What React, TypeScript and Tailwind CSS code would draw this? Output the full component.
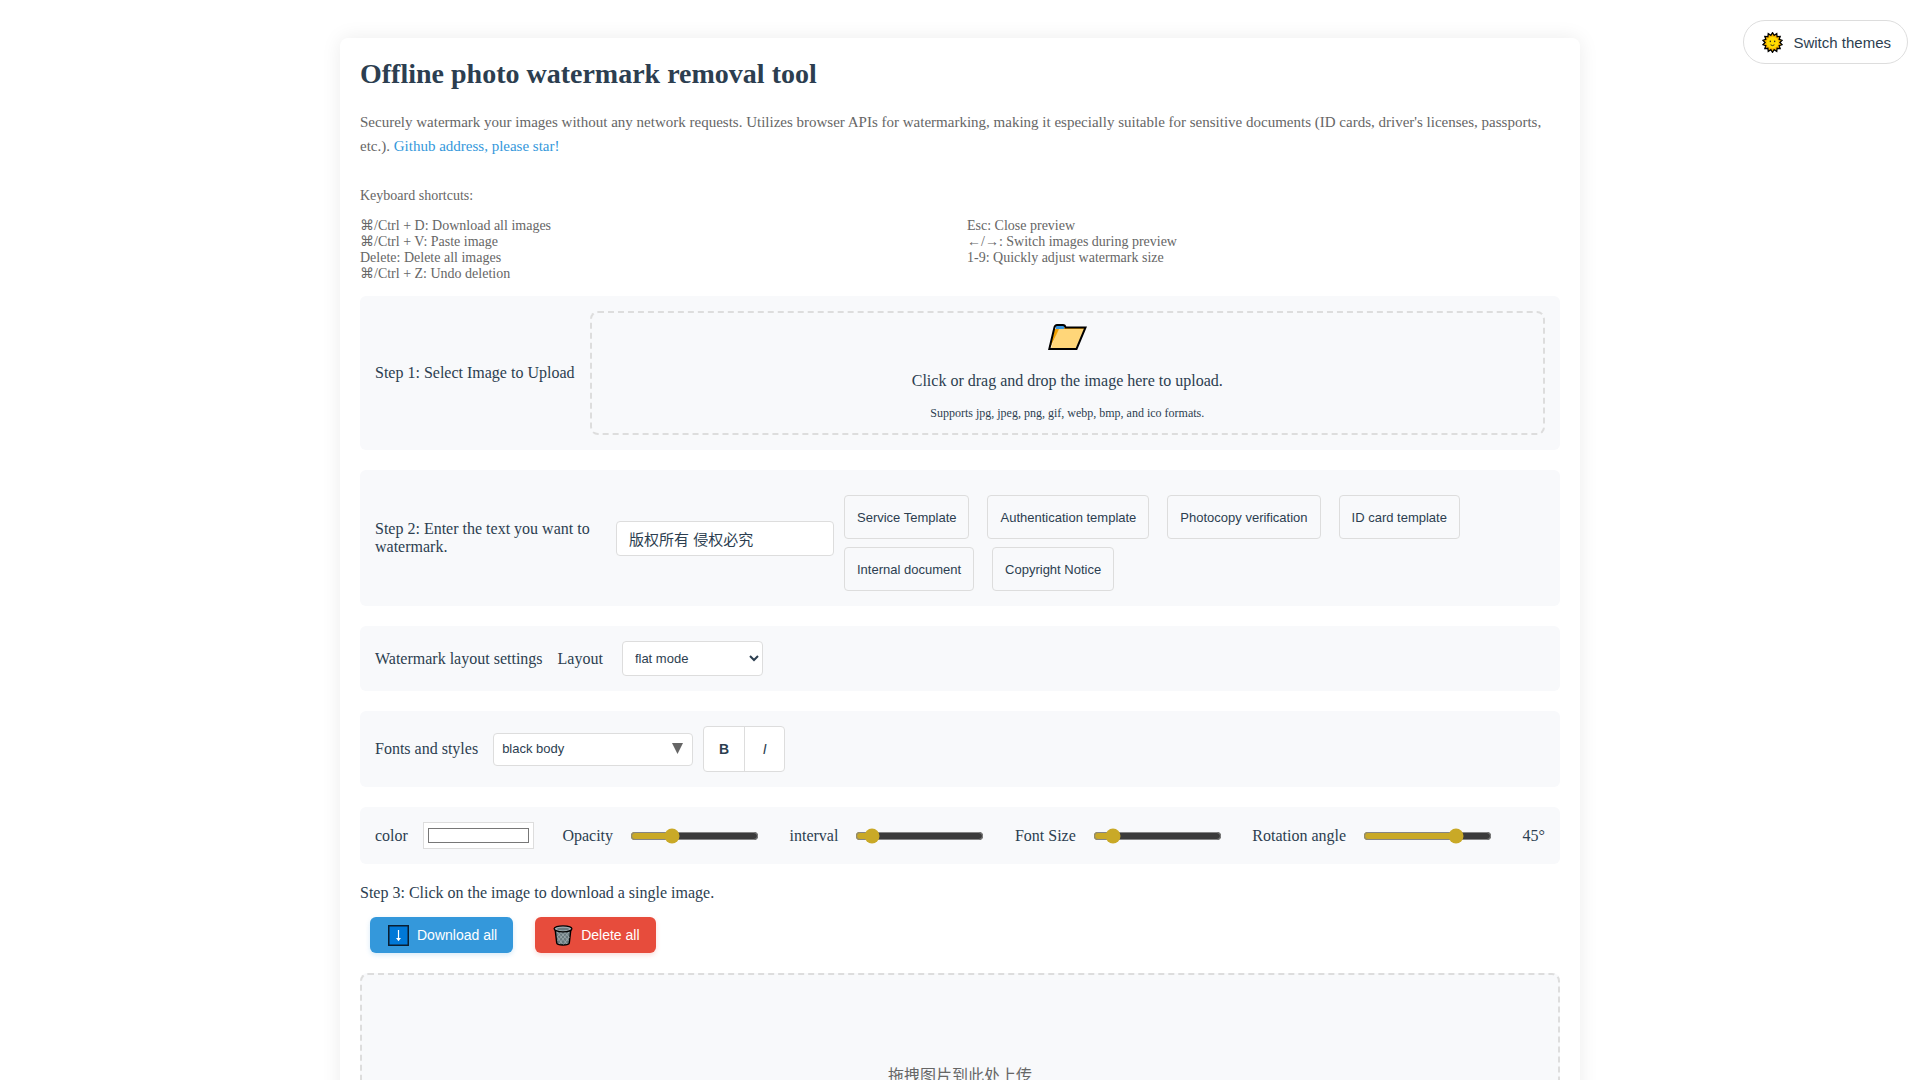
import React, { useState } from "react";

// =========================
// ICONS
// =========================
const SUN_POINTS = Array.from({ length: 28 }, (_, i) => {
  const r = i % 2 === 0 ? 9.8 : 7.4;
  const a = (i * Math.PI) / 14 - Math.PI / 2;
  return `${(10.5 + r * Math.cos(a)).toFixed(2)},${(10.5 + r * Math.sin(a)).toFixed(2)}`;
}).join(" ");

const SunIcon = () => (
  <svg width="21" height="21" viewBox="0 0 21 21" aria-hidden="true">
    <polygon points={SUN_POINTS} fill="#fcb900" stroke="#000" strokeWidth="1.3" />
    <circle cx="10.5" cy="10.5" r="5.8" fill="#ffdd00" />
    <ellipse cx="8.3" cy="9.3" rx="0.7" ry="0.9" fill="#222" />
    <ellipse cx="12.7" cy="9.3" rx="0.7" ry="0.9" fill="#222" />
    <path d="M8.6 12.8q1.9 1.6 3.8 0" fill="none" stroke="#222" strokeWidth="0.9" />
  </svg>
);

const FolderIcon = () => (
  <svg width="40" height="28" viewBox="0 0 40 28" aria-hidden="true">
    <path d="M8 6L3 25L10 7H38V5H18z" fill="#f2a100" />
    <path d="M11 6H38L29 25H4z" fill="#ffd679" />
    <path d="M3 25L8 6H12z" fill="#f2a100" />
    <path d="M9 3h8v3H9z" fill="#3a96dd" />
    <path d="M2.300 26L7.300 5Q8 2 10 2h6q2 0 2.500 2.500H38.500L29.500 26z" fill="none" stroke="#000" strokeWidth="2" />
  </svg>
);

const DownloadIcon = () => (
  <svg width="21" height="21" viewBox="0 0 21 21" aria-hidden="true">
    <rect x="0.75" y="0.75" width="19.500" height="19.500" fill="#0078d7" stroke="#0b1e30" strokeWidth="1.500" />
    <path d="M10.500 5v9" stroke="#fff" strokeWidth="1.200" />
    <path d="M8 13h5l-2.500 3.200z" fill="#fff" />
  </svg>
);

const TrashIcon = () => (
  <svg width="20" height="21" viewBox="0 0 20 21" aria-hidden="true">
    <path d="M2.200 5l1.500 13q.3 2 6.300 2t6.300-2l1.500-13z" fill="#69797e" stroke="#000" strokeWidth="1.400" />
    <path d="M4 7l10 12M7 6.500l8.500 9.500M11 6.500l5.500 6M4.500 12l5 7M16 7L6 19M13 6.500L4.500 16M9 6.500L4 12M16 12l-5.500 7.500" stroke="#a9b4b8" strokeWidth="0.700" />
    <ellipse cx="10" cy="3.800" rx="8.900" ry="3" fill="#9fadb2" stroke="#000" strokeWidth="1.300" />
    <ellipse cx="10" cy="4.100" rx="6.200" ry="1.400" fill="#69797e" />
  </svg>
);

// =========================
// SHARED PARTS
// =========================
const TEMPLATES = [
  "Service Template",
  "Authentication template",
  "Photocopy verification",
  "ID card template",
  "Internal document",
  "Copyright Notice",
];

const LEFT_SHORTCUTS = [
  "⌘/Ctrl + D: Download all images",
  "⌘/Ctrl + V: Paste image",
  "Delete: Delete all images",
  "⌘/Ctrl + Z: Undo deletion",
];

const RIGHT_SHORTCUTS = [
  "Esc: Close preview",
  "←/→: Switch images during preview",
  "1-9: Quickly adjust watermark size",
];

interface SliderProps {
  id: string;
  label: string;
  min?: number;
  max?: number;
  value: number;
  onChange: (value: number) => void;
}

const Slider: React.FC<SliderProps> = ({ id, label, min = 0, max = 100, value, onChange }) => (
  <div className="flex items-center gap-[15px]">
    <label htmlFor={id} className="whitespace-nowrap">
      {label}
    </label>
    <input
      id={id}
      type="range"
      min={min}
      max={max}
      value={value}
      onChange={(e) => onChange(Number(e.target.value))}
      className="mx-[2px] h-4 w-[129px] min-w-0 accent-[#c9a927]"
    />
  </div>
);

const Row = ({ children, className = "" }: { children: React.ReactNode; className?: string }) => (
  <section className={`mb-5 flex items-center rounded-md bg-[#f8f9fb] p-[15px] ${className}`}>
    {children}
  </section>
);

export default function App() {
  const [text, setText] = useState("版权所有 侵权必究");
  const [color, setColor] = useState("#ffffff");
  const [opacity, setOpacity] = useState(30);
  const [interval, setIntervalSize] = useState(8);
  const [fontSize, setFontSize] = useState(11);
  const [angle, setAngle] = useState(45);

  return (
    <div className="min-h-screen bg-white px-5 pt-[38px] font-['Liberation_Serif','Noto_Sans_CJK_SC',serif] text-base leading-[18px] text-[#2c3e50]">
      <button className="fixed top-5 right-3 flex h-11 items-center gap-2.5 rounded-full border border-[#ddd] bg-white pr-4 pl-[18px] pt-px font-['Liberation_Sans',sans-serif] text-[15px]">
        <SunIcon />
        Switch themes
      </button>

      <main className="mx-auto max-w-[1240px] rounded-lg bg-white p-5 shadow-[0_0_20px_rgba(0,0,0,0.08)]">
        <h1 className="mb-5 text-[28px] leading-8 font-bold">Offline photo watermark removal tool</h1>

        <p className="text-[15px] leading-6 text-[#666]">
          Securely watermark your images without any network requests. Utilizes browser APIs for
          watermarking, making it especially suitable for sensitive documents (ID cards, driver's
          licenses, passports, etc.).{" "}
          <a href="#github" className="text-[#3498db]">
            Github address, please star!
          </a>
        </p>

        <div className="mt-[30px] mb-3.5 font-['Liberation_Serif','DejaVu_Sans',serif] text-sm leading-4 text-[#666]">
          <p className="mb-3.5">Keyboard shortcuts:</p>
          <div className="grid grid-cols-2 gap-3.5">
            <ul>
              {LEFT_SHORTCUTS.map((s) => (
                <li key={s}>{s}</li>
              ))}
            </ul>
            <ul>
              {RIGHT_SHORTCUTS.map((s) => (
                <li key={s}>{s}</li>
              ))}
            </ul>
          </div>
        </div>

        {/* STEP 1 */}
        <Row className="gap-[15px]">
          <h2 className="whitespace-nowrap">Step 1: Select Image to Upload</h2>
          <button className="flex h-[124px] flex-1 flex-col items-center rounded-lg border-2 border-dashed border-[#ddd] pt-2.5">
            <FolderIcon />
            <span className="mt-[21px]">Click or drag and drop the image here to upload.</span>
            <span className="mt-3.5 text-xs leading-[18px]">
              Supports jpg, jpeg, png, gif, webp, bmp, and ico formats.
            </span>
          </button>
        </Row>

        {/* STEP 2 */}
        <Row>
          <label htmlFor="watermark-text" className="mr-[15px] w-[226px]">
            Step 2: Enter the text you want to watermark.
          </label>
          <input
            id="watermark-text"
            type="text"
            value={text}
            onChange={(e) => setText(e.target.value)}
            className="mr-2.5 h-[35px] w-[218px] rounded border border-[#ddd] bg-white px-3 font-['Liberation_Sans','Noto_Sans_CJK_SC',sans-serif] text-[15px]"
          />
          <div className="mt-2.5 flex flex-1 flex-wrap gap-x-[18px] gap-y-2">
            {TEMPLATES.map((name) => (
              <button
                key={name}
                className="h-11 rounded border border-[#ddd] px-3 pt-px font-['Liberation_Sans',sans-serif] text-[13px]"
              >
                {name}
              </button>
            ))}
          </div>
        </Row>

        {/* LAYOUT */}
        <Row className="gap-[15px]">
          <h2>Watermark layout settings</h2>
          <div className="flex items-center gap-[19px]">
            <label htmlFor="layout">Layout</label>
            <select
              id="layout"
              className="h-[35px] w-[141px] rounded border border-[#ddd] bg-white px-2 font-['Liberation_Sans',sans-serif] text-[13px]"
            >
              <option>flat mode</option>
              <option>single mode</option>
            </select>
          </div>
        </Row>

        {/* FONT */}
        <Row className="gap-[15px]">
          <label htmlFor="font">Fonts and styles</label>
          <div className="flex items-center gap-2.5">
            <div className="relative">
              <select
                id="font"
                className="h-[33px] w-[200px] appearance-none rounded border border-[#ddd] bg-white px-2 font-['Liberation_Sans',sans-serif] text-[13px]"
              >
                <option>black body</option>
                <option>serif</option>
              </select>
              <svg
                className="pointer-events-none absolute top-2.5 right-2.5"
                width="11"
                height="11"
                viewBox="0 0 11 11"
                aria-hidden="true"
              >
                <path d="M0 0h11L5.500 11z" fill="#666" />
              </svg>
            </div>
            <div className="flex h-[46px] overflow-hidden rounded border border-[#ddd] bg-white font-['Liberation_Sans',sans-serif] text-sm">
              <button className="w-[41px] border-r border-[#ddd] font-bold">B</button>
              <button className="w-[39px] italic">I</button>
            </div>
          </div>
        </Row>

        {/* COLOR AND SLIDERS */}
        <Row className="justify-between">
          <div className="flex items-center gap-[15px]">
            <label htmlFor="color">color</label>
            <input
              id="color"
              type="color"
              value={color}
              onChange={(e) => setColor(e.target.value)}
              className="h-[27px] w-[111px] border border-[#ddd] bg-white px-[2px] py-px"
            />
          </div>
          <Slider id="opacity" label="Opacity" value={opacity} onChange={setOpacity} />
          <Slider id="interval" label="interval" value={interval} onChange={setIntervalSize} />
          <Slider id="font-size" label="Font Size" value={fontSize} onChange={setFontSize} />
          <Slider id="angle" label="Rotation angle" min={-90} max={90} value={angle} onChange={setAngle} />
          <output htmlFor="angle">{angle}°</output>
        </Row>

        {/* STEP 3 */}
        <h2>Step 3: Click on the image to download a single image.</h2>
        <div className="mx-2.5 mt-[15px] mb-5 flex gap-[22px] font-['Liberation_Sans',sans-serif] text-sm text-white">
          <button className="flex h-9 items-center gap-2 rounded-md bg-[#3498db] pr-4 pl-[18px] shadow-[0_2px_5px_rgba(52,152,219,0.2)]">
            <DownloadIcon />
            Download all
          </button>
          <button className="flex h-9 items-center gap-2 rounded-md bg-[#e74c3c] pr-4 pl-[18px] shadow-[0_2px_5px_rgba(231,76,60,0.2)]">
            <TrashIcon />
            Delete all
          </button>
        </div>

        <div className="flex min-h-[206px] items-center justify-center rounded-lg border-2 border-dashed border-[#ddd] bg-[#f8f9fb] text-[#666]">
          拖拽图片到此处上传
        </div>
      </main>
    </div>
  );
}
